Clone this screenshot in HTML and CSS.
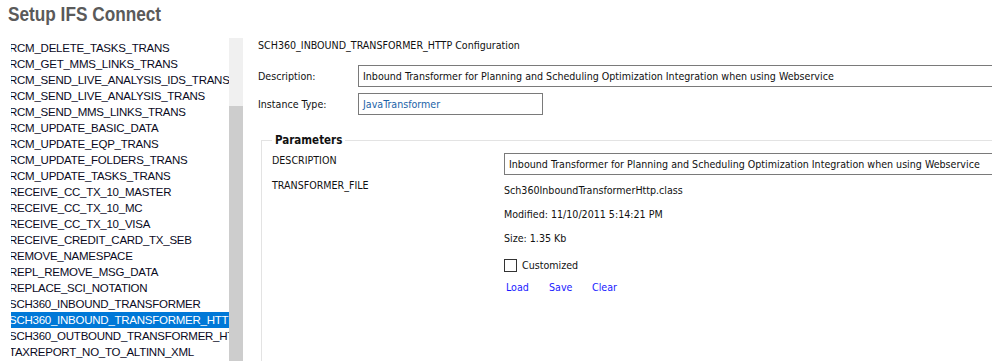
FILE: index.html
```html
<!DOCTYPE html>
<html>
<head>
  <title>Setup IFS Connect</title>
  <link rel="stylesheet" href="styles.css">
</head>
<body>
  <h1><span>Setup IFS Connect</span></h1>

  <div class="layout">
    <div class="list-pane">
      <ul class="list">
        <li>RCM_DELETE_TASKS_TRANS</li>
        <li>RCM_GET_MMS_LINKS_TRANS</li>
        <li>RCM_SEND_LIVE_ANALYSIS_IDS_TRANS</li>
        <li>RCM_SEND_LIVE_ANALYSIS_TRANS</li>
        <li>RCM_SEND_MMS_LINKS_TRANS</li>
        <li>RCM_UPDATE_BASIC_DATA</li>
        <li>RCM_UPDATE_EQP_TRANS</li>
        <li>RCM_UPDATE_FOLDERS_TRANS</li>
        <li>RCM_UPDATE_TASKS_TRANS</li>
        <li>RECEIVE_CC_TX_10_MASTER</li>
        <li>RECEIVE_CC_TX_10_MC</li>
        <li>RECEIVE_CC_TX_10_VISA</li>
        <li>RECEIVE_CREDIT_CARD_TX_SEB</li>
        <li>REMOVE_NAMESPACE</li>
        <li>REPL_REMOVE_MSG_DATA</li>
        <li>REPLACE_SCI_NOTATION</li>
        <li>SCH360_INBOUND_TRANSFORMER</li>
        <li class="selected">SCH360_INBOUND_TRANSFORMER_HTTP</li>
        <li>SCH360_OUTBOUND_TRANSFORMER_HTTP</li>
        <li>TAXREPORT_NO_TO_ALTINN_XML</li>
      </ul>
      <div class="scrollbar">
        <div class="scroll-thumb"></div>
      </div>
    </div>

    <div class="details">
      <div class="config-title">SCH360_INBOUND_TRANSFORMER_HTTP Configuration</div>

      <div class="field-row first">
        <label>Description:</label>
        <div class="text-box">Inbound Transformer for Planning and Scheduling Optimization Integration when using Webservice</div>
      </div>
      <div class="field-row">
        <label>Instance Type:</label>
        <div class="text-box short link-text">JavaTransformer</div>
      </div>

      <fieldset class="params">
        <legend>Parameters</legend>
        <div class="param-grid">
          <div class="param-name first">DESCRIPTION</div>
          <div class="param-value">
            <div class="text-box">Inbound Transformer for Planning and Scheduling Optimization Integration when using Webservice</div>
          </div>

          <div class="param-name">TRANSFORMER_FILE</div>
          <div class="param-value file-info">
            <div class="info-line">Sch360InboundTransformerHttp.class</div>
            <div class="info-line">Modified: 11/10/2011 5:14:21 PM</div>
            <div class="info-line">Size: 1.35 Kb</div>
            <div class="check-row">
              <span class="check-box"></span>
              <span>Customized</span>
            </div>
            <div class="actions">
              <a href="#">Load</a>
              <a href="#">Save</a>
              <a href="#">Clear</a>
            </div>
          </div>
        </div>
      </fieldset>
    </div>
  </div>
</body>
</html>
```

FILE: styles.css
```css
body {
  margin: 0;
  padding: 0;
  width: 992px;
  height: 361px;
  overflow: hidden;
  background-color: #ffffff;
  font-family: 'Liberation Sans', Arial, sans-serif;
  color: #000000;
}

h1 {
  margin: 0;
  padding: 2px 0 0 8px;
  height: 35px;
  box-sizing: border-box;
  font-family: 'Liberation Sans', Arial, sans-serif;
  font-weight: bold;
  font-size: 21px;
  color: #5a5a5a;
}

/* the title face is a condensed one */
h1 span {
  display: inline-block;
  transform: scaleX(0.82);
  transform-origin: left center;
}

.layout {
  display: flex;
  align-items: flex-start;
}

/* left list with its scrollbar */
.list-pane {
  display: flex;
  margin-left: 11px;
  margin-top: 3px;
  height: 323px;
}

.list {
  list-style: none;
  margin: 0;
  padding: 2px 0 0 0;
  width: 218px;
  overflow: hidden;
}

.list li {
  height: 16px;
  line-height: 16px;
  font-size: 11.5px;
  letter-spacing: -0.25px;
  white-space: nowrap;
  color: #0a0a1e;
  text-indent: -2px;
}

.list li.selected {
  background-color: #0078d7;
  color: #ffffff;
}

.scrollbar {
  width: 14px;
  background-color: #f0f0f0;
  display: flex;
  flex-direction: column;
  padding-top: 68px;
  box-sizing: border-box;
}

.scroll-thumb {
  flex: 1;
  background-color: #cdcdcd;
}

/* right side */
.details {
  flex: 1;
  min-width: 0;
  padding-left: 15px;
  font-family: 'DejaVu Sans Condensed', 'DejaVu Sans', sans-serif;
  font-size: 10.6px;
  color: #111;
}

.config-title {
  margin-top: 2px;
  height: 16px;
  line-height: 16px;
}

.field-row {
  display: flex;
  align-items: center;
  height: 22px;
  margin-top: 6px;
}

.field-row.first {
  margin-top: 12px;
}

.field-row label {
  width: 100px;
  flex: none;
}

.text-box {
  flex: 1;
  height: 22px;
  box-sizing: border-box;
  border: 1px solid #7a7a7a;
  border-right: none;
  padding: 0 4px;
  line-height: 20px;
  white-space: nowrap;
  overflow: hidden;
  background: #fff;
}

.text-box.short {
  flex: none;
  width: 185px;
  border-right: 1px solid #7a7a7a;
}

.link-text {
  color: #1b63a8;
}

.params {
  margin: 18px 0 0 3px;
  padding: 0 0 0 10px;
  border: 1px solid #e3e3e3;
  border-right: none;
  height: 240px;
}

.params legend {
  font-weight: bold;
  font-size: 11.5px;
  padding: 0 3px;
  height: 15px;
  line-height: 15px;
}

.param-grid {
  display: grid;
  grid-template-columns: 232px 1fr;
}

.param-name {
  line-height: 16px;
  padding-top: 2px;
}

.param-name.first {
  padding-top: 4px;
}

.param-value .text-box {
  margin-top: 5px;
}

.file-info {
  padding-top: 7px;
}

.info-line {
  height: 24px;
  line-height: 16px;
}

.check-row {
  display: flex;
  align-items: center;
  gap: 5px;
  height: 16px;
  margin-top: 3px;
}

.check-box {
  width: 11px;
  height: 11px;
  border: 1px solid #333;
  background: #fff;
}

.actions {
  display: flex;
  margin-top: 6px;
  padding-left: 2px;
  line-height: 16px;
}

.actions a {
  width: 43px;
  color: #1a1aff;
  text-decoration: none;
}
```
